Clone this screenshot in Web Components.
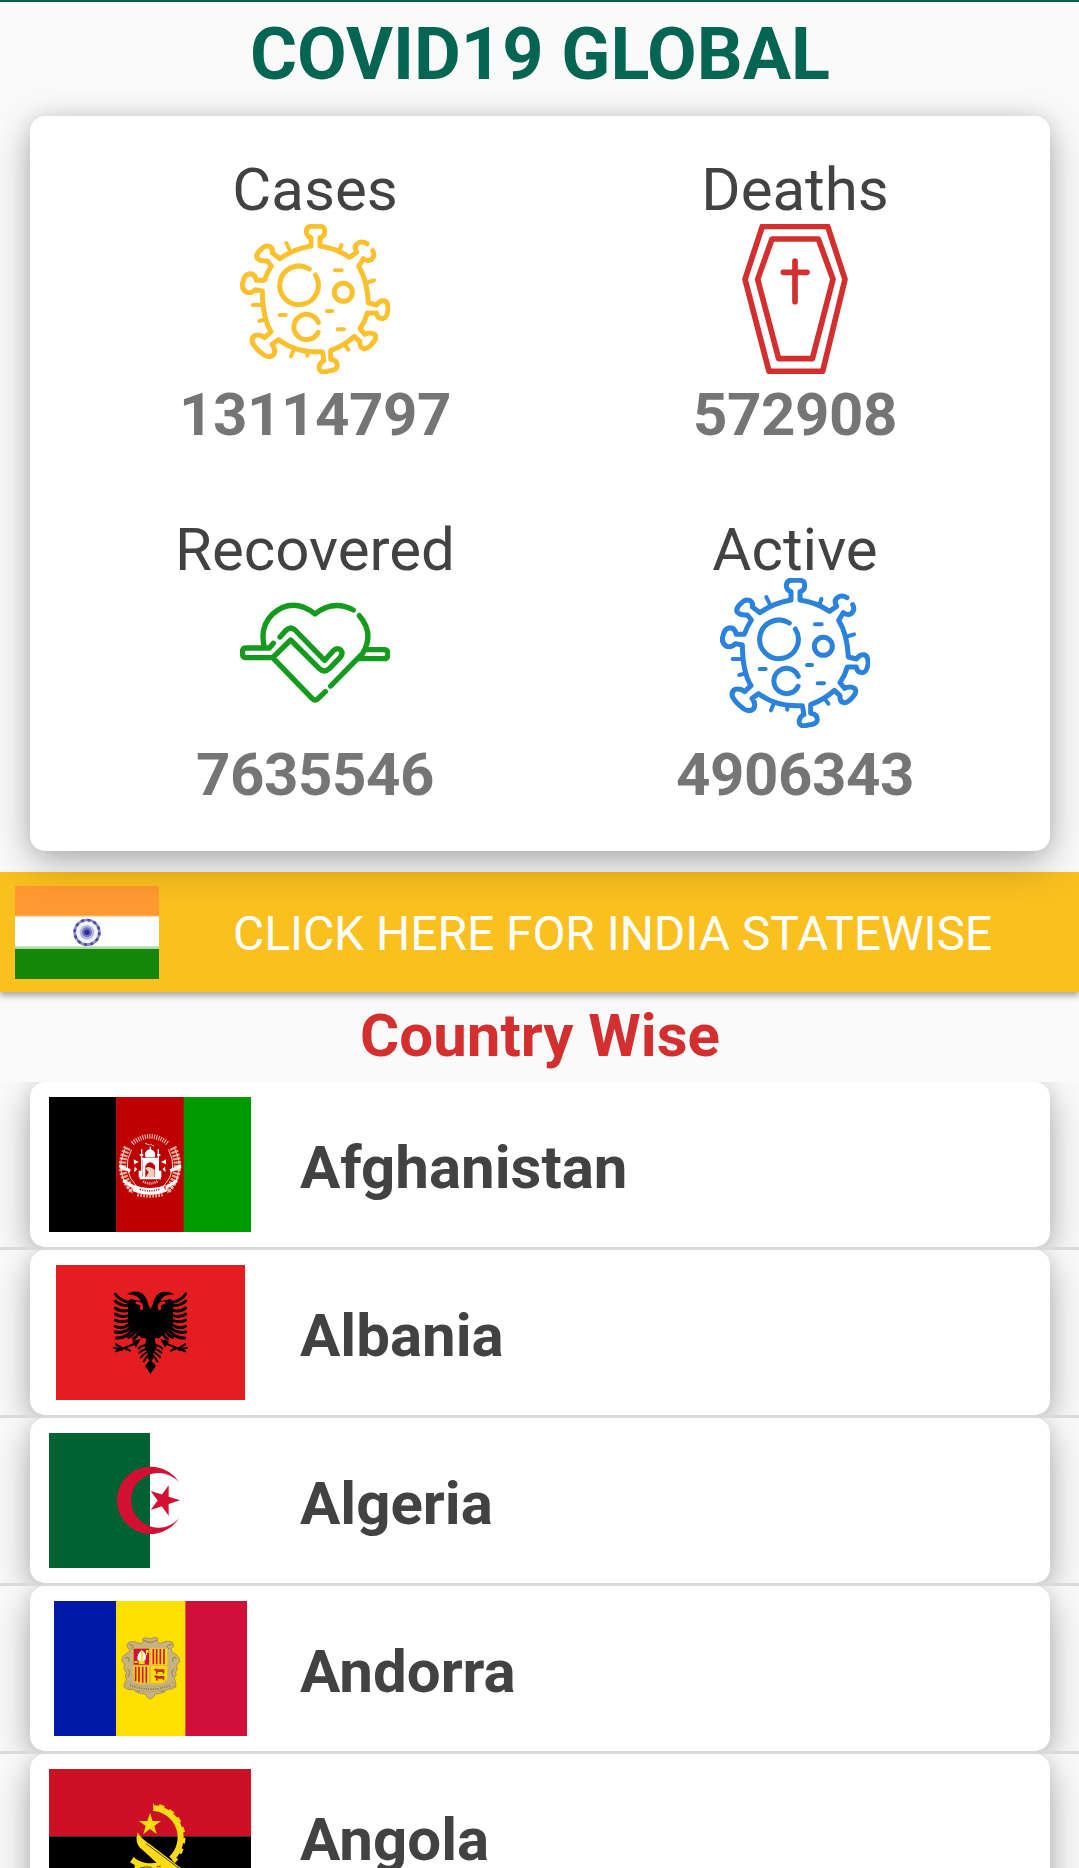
<!DOCTYPE html>
<html lang="en">
<head>
<meta charset="utf-8">
<title>COVID19 GLOBAL</title>
<style>
html,body{margin:0;padding:0}
body{width:1079px;height:1868px;overflow:hidden;background:#fafafa;font-family:Roboto,"Liberation Sans",sans-serif;color:#424242}
</style>
</head>
<body>
<covid-app></covid-app>
<script>
const define = (name, html) => {
  const t = document.createElement('template');
  t.innerHTML = html;
  customElements.define(name, class extends HTMLElement {
    constructor() {
      super();
      this.attachShadow({mode: 'open'}).append(t.content.cloneNode(true));
    }
  });
};

const virus = `<svg viewBox="30 27 450 450" fill="none" stroke="currentColor" stroke-width="15" stroke-linecap="round" stroke-linejoin="round">
<path d="M411 86Q395 76 382 86Q370 95 380 112L358 127Q320 100 270 93V68Q284 64 284 50Q285 34 270 34H244Q231 34 229 48Q228 62 243 68V93Q190 102 150 131L127 114Q130 100 118 94Q104 90 90 106Q76 120 82 130Q92 140 112 138L124 153Q110 175 103 196H79Q74 174 56 177Q42 180 38 205Q34 222 50 232Q64 236 76 224L97 228Q98 310 123 350L104 368Q92 358 76 361Q62 368 68 385Q80 405 102 420Q118 430 130 420Q140 405 126 388L146 374Q200 415 277 410L282 437Q272 440 268 453Q265 470 282 471L300 467Q320 466 322 452Q322 436 302 433V407Q345 390 373 364L390 380Q388 398 402 401Q415 402 430 382Q442 368 434 358Q420 350 404 358L390 341Q405 320 412 294H439Q440 308 455 311Q470 312 474 285Q476 262 462 257Q447 256 440 270L415 264Q412 195 386 154L400 131Q412 141 425 133Q436 122 428 107"/>
<path stroke-width="12" d="M179 105L169 84M329 105L334 90M412 202L432 196M95 270H68M103 314L88 318M191 404L183 424M231 410L232 422M346 392L355 404M315 166H335M149 300H167M291 288H306M323 343H342"/>
<path d="M238 162A58 58 0 1 0 256 180M265 322A38 38 0 1 0 264 352"/><circle cx="340" cy="232" r="27"/></svg>`;

const iconCss = `<style>:host{display:block;width:150px;height:150px}svg{display:block;width:150px;height:150px}</style>`;
define('icon-virus', iconCss + virus);
define('icon-coffin', iconCss + `<svg viewBox="-30 27 450 450" fill="none" stroke="currentColor" stroke-width="17" stroke-linecap="round" stroke-linejoin="round">
<path d="M97 34H293L345 193L278 469H117L45 193ZM126 72H265L309 193L247 431H146L83 193ZM195 138V260M160 172H231"/></svg>`);
define('icon-heart', iconCss + `<svg viewBox="30 -36 450 450" fill="none" stroke="currentColor" stroke-width="16" stroke-linecap="round" stroke-linejoin="round">
<path d="M130 160L118 174H49Q37 174 37 188Q37 203 49 203H128L182 150L268 236Q283 250 298 236L330 203Q341 190 332 180Q320 172 310 182L284 211L195 120Q181 107 167 122L150 141M103 172Q88 110 128 72Q188 20 255 72Q310 28 370 60M388 77Q434 130 398 190L302 288M128 203L246 325Q255 335 264 326L286 305M406 179H462Q474 180 474 192Q473 206 462 206H388"/></svg>`);

define('app-title', `<style>
:host{display:block;height:114px;border-top:2px solid #00614f;text-align:center}
h1{margin:0;padding-left:1px;font-size:72px;line-height:105px;font-weight:700;color:#046553}
</style><h1><slot></slot></h1>`);

define('stat-tile', `<style>
:host{display:flex;flex-direction:column;align-items:center}
.label{font-size:60px;line-height:var(--label,71px);margin-bottom:var(--pull,-1px);color:#424242}
.value{font-size:60px;font-weight:700;line-height:var(--value,81px);letter-spacing:-.4px;color:#757575}
</style><div class="label"><slot name="label"></slot></div><slot></slot><div class="value"><slot name="value"></slot></div>`);

define('stats-card', `<style>
:host{display:grid;grid-template-columns:480px 480px;row-gap:66px;align-content:start;box-sizing:border-box;width:1020px;height:735px;margin:0 29px 0 30px;padding:38px 15px 0 45px;background:#fff;border-radius:15px;position:relative;z-index:1;
box-shadow:0 12px 42px rgba(0,0,0,.28),0 2px 18px rgba(0,0,0,.10)}
</style><slot></slot>`);

define('india-flag', `<style>:host,svg{display:block;width:144px;height:93px}</style>
<svg viewBox="45 198 432 279" preserveAspectRatio="none"><path fill="#ff9932" d="M45 198h432v93H45z"/><path fill="#fff" d="M45 290h432v95H45z"/><path fill="#138808" d="M45 386h432v91H45z"/><path fill="#ffd9b4" d="M45 287h432v4H45z"/><path fill="#b7dcb4" d="M45 379h432v7H45z"/>
<circle cx="261" cy="337" r="37" fill="#f3f3fb" stroke="#8b8bc8" stroke-width="8"/><circle cx="261" cy="337" r="37" fill="none" stroke="#4a4aa6" stroke-width="8" stroke-dasharray="9 10.4"/><circle cx="261" cy="337" r="22" fill="#b9b9e0"/><circle cx="261" cy="337" r="15" fill="#7272be"/><circle cx="261" cy="337" r="8" fill="#2a2a9c"/></svg>`);

define('state-link', `<style>
:host{display:flex;align-items:center;box-sizing:border-box;height:120px;margin-top:21px;padding:0 0 0 15px;background:#fac01f;color:#fff;box-shadow:0 4px 6px rgba(0,0,0,.32)}
.text{flex:1;padding:4px 0 0 74px;font-size:48px;line-height:60px;letter-spacing:-.07px;white-space:nowrap}
</style><india-flag></india-flag><div class="text"><slot></slot></div>`);

define('section-title', `<style>
:host{display:block;height:90px;text-align:center}
h2{margin:0;padding-left:1px;font-size:60px;line-height:87px;font-weight:700;color:#d32f2f}
</style><h2><slot></slot></h2>`);

const flag = (w, box, art) => `<style>:host{display:block}svg{display:block;width:${w}px;height:135px}</style><svg viewBox="${box}">${art}</svg>`;

define('flag-af', flag(202, '27 21 606 405', `
<path d="M27 21h203v405H27z"/><path fill="#be0000" d="M229 21h203v405H229z"/><path fill="#090" d="M431 21h202v405H431z"/>
<g fill="none" stroke="#f3cfc6" stroke-linecap="round">
<path stroke-width="14" stroke-dasharray="3 4" stroke-linecap="butt" d="M277 160Q330 118 383 160"/>
<path stroke-width="3" d="M316 160l12 5m4-2l9 5"/>
<path stroke="#e7a693" stroke-width="22" stroke-dasharray="7 4" stroke-linecap="butt" d="M262 172Q226 242 280 304M398 172Q434 242 380 304"/>
<path stroke="#f6dcd4" stroke-width="3" d="M255 178Q221 245 277 309M405 178Q439 245 383 309M274 180Q242 238 290 290M386 180Q418 238 370 290"/>
</g>
<g fill="#fff"><path d="M239 223l33 15-2 9-31-12zM423 223l-34 15 3 9 32-12zM249 266l40 24-3 9-36-21zM413 266l-41 24 3 9 36-21zM284 285q45 20 92 0l7 19q-52 22-105 0z"/>
<path d="M308 262v-55h45v55h-8v-35q-14-20-29 0v35zM299 261h64v7h-64zM303 203h54v6h-54zM317 202q-6-13 3-20 10-8 20 0 9 7 4 20zM329 170h4v12h-4zM303 178h4v83h-4zM353 178h4v83h-4zM299 192h11v5h-11zM351 192h10v5h-10zM296 242h10v20h-10zM354 242h10v20h-10z"/>
<path fill="#f4cabf" d="M316 235q10-10 28 4v23h-27l9-15z"/><path d="M281 208l15 8-14 7zM378 208l-15 8 15 7zM284 230l8 8-10 9zM375 230l-8 8 10 9z"/></g>
<path d="M300 298q30 10 62-1" fill="none" stroke="#be0000" stroke-width="5" stroke-dasharray="3 4"/>
<path d="M309 274q20 12 44 0" fill="none" stroke="#f2c4ba" stroke-width="8" stroke-dasharray="3 3"/>
<path fill="none" stroke="#e9b0a0" stroke-width="10" stroke-dasharray="5 4" d="M292 314q38 8 76 0"/>`));

const eagleHalf = `<path d="M333 180L325 164Q320 133 296 125L278 125L260 133L283 136Q298 142 302 153L281 149Q270 143 264 155V222Q273 242 285 242L305 265H319L314 292L332 330H333Z"/>
<path fill="none" stroke="#000" stroke-width="9" stroke-linecap="round" d="M270 158Q238 151 226 132M268 167Q240 168 226 153M267 181Q242 187 226 174M267 196Q242 204 226 192M268 210Q244 221 226 210M272 220Q246 241 226 229M276 228Q256 252 226 246M282 233Q260 266 229 264M290 238Q275 260 266 262M299 240Q292 260 281 266"/>
<path fill="none" stroke="#e41e20" stroke-width="9" stroke-linecap="round" d="M291 158Q309 160 304 176"/>
<path d="M276 273L302 267 288 293Z"/>
<path fill="none" stroke="#000" stroke-width="6" stroke-linecap="round" d="M282 282L228 304M246 299L222 293M248 296L228 283M252 294L270 302M319 285Q303 287 296 296M321 295Q306 301 298 308M321 306Q309 314 303 321M324 316Q314 328 311 334"/>
<path d="M333 300L323 323L328 333L315 348L332 371H333Z"/>`;
define('flag-al', flag(189, '48 45 567 405', `<path fill="#e41e20" d="M48 45h567v405H48z"/><g>${eagleHalf}</g><g transform="translate(663)scale(-1 1)">${eagleHalf}</g>`));

define('flag-dz', flag(202, '147 39 606 405', `<path fill="#fff" d="M147 39h606v405H147z"/><path fill="#006233" d="M147 39h303v405H147z"/>
<path fill="#d21034" d="M537 187A101 101 0 1 0 537 295A82 82 0 1 1 537 187ZM540 241L452 213L506 287V196L452 270Z"/>`));

define('flag-ad', flag(193, '42 33 579 405', `<path fill="#0018a8" d="M42 33h186v405H42z"/><path fill="#fedf00" d="M228 33h208v405H228z"/><path fill="#d0103a" d="M436 33h185v405H436z"/>
<path fill="#c7b37f" stroke="#a08b50" stroke-width="2.5" d="M331 146Q350 139 354 146Q350 157 360 161Q382 148 398 158Q405 170 394 176Q392 185 404 191Q420 200 419 216Q408 220 411 228Q415 238 407 246Q412 256 403 263Q408 278 408 290Q401 298 382 298Q374 310 347 312Q339 324 331 328Q322 324 315 312Q289 310 281 299Q260 300 252 291Q251 280 259 270Q253 257 259 247Q248 238 253 228Q257 219 246 215Q244 199 260 190Q273 184 267 177Q256 170 266 157Q282 150 300 161Q312 160 308 146Q316 141 331 146Z"/>
<path fill="none" stroke="#8f7b48" stroke-width="3" d="M268 163q20 5 6 15M394 163q-20 5-6 15M311 150q20 14 40 0M255 205q14-9 12 10M410 205q-14-9-12 10M262 236q12 10 2 25M402 236q-12 10-2 25M290 304q41-10 82 0"/>
<path fill="#c7b37f" stroke="#9a8755" d="M262 276Q290 290 331 291Q372 290 400 276L404 289Q370 305 331 306Q291 305 258 290Z"/>
<path fill="none" stroke="#77704b" stroke-width="5" stroke-dasharray="3 4" d="M270 286Q331 309 393 286"/>
<path fill="#e2b84c" d="M278 173h106v86q0 20-22 22h-62q-22-2-22-22z"/>
<path fill="#d0103a" d="M281 176h46v48h-46z"/><path fill="#fedf00" d="M333 176h48v48h-48zM281 229h46v50h-29q-17-3-17-18zM333 229h48v32q0 15-17 18h-31z"/>
<path stroke="#d0103a" stroke-width="5" d="M340 177v46M350 177v46M361 177v46M372 177v46M287 230v43M297 230v47M308 230v48M319 230v48"/>
<path fill="#fff" d="M305 180q18 12 11 31l-12 5-11-5q-5-15 12-31z"/><path fill="#fedf00" d="M303 183h5v33h-5zM296 214h18v8h-18zM318 180h8v8h-5v8h-4zM283 213h10v6h-10z"/>
<path fill="#c2302f" d="M341 239l7-4 4 3h21v13h-5v-5h-15v6h-5v-8zM341 259l7-4 4 3h21v13h-5v-5h-15v6h-5v-8z"/>`));

define('flag-ao', flag(202, '147 102 606 405', `<path fill="#cc1126" d="M147 102h606v202H147z"/><path d="M147 304h606v203H147z"/>
<g fill="none" stroke="#ffdb16"><path stroke-width="18" d="M460 219A88 88 0 0 1 514 371"/><path stroke-width="13" stroke-dasharray="16 16" stroke-dashoffset="-18" d="M459 211A98 98 0 0 1 520 379"/></g>
<path fill="#ffdb16" d="M450 234l8 24h25l-20 15 7 24-20-15-20 15 7-24-20-15h25zM413 292Q424 312 450 328L545 401V430H520L428 345Q407 331 410 306ZM401 366Q414 380 438 384Q465 387 487 379L488 430H404L404 390L390 382Z"/>
<path fill="none" stroke="#000" stroke-width="2" d="M438 326L540 402M420 399q20-6 35-2M470 396l12-3"/>`));

define('country-row', `<style>
:host{display:block;height:165px;overflow:hidden;border-bottom:3px solid #dadada}
.card{display:flex;align-items:center;box-sizing:border-box;height:165px;margin:0 29px 0 30px;padding-left:19px;background:#fff;border-radius:15px;box-shadow:0 12px 42px rgba(0,0,0,.28),0 2px 18px rgba(0,0,0,.10)}
.flag{display:flex;justify-content:center;width:202px}
.name{margin-left:49px;padding-top:6px;font-size:60px;line-height:72px;font-weight:700;color:#424242}
</style><div class="card"><div class="flag"><slot name="flag"></slot></div><div class="name"><slot></slot></div></div>`);

define('covid-app', `<style>
:host{display:flex;flex-direction:column;height:1868px;overflow:hidden}
:host>*{flex:none}
.lower{--label:57px;--value:93px;--pull:0px}
</style>
<app-title>COVID19 GLOBAL</app-title>
<stats-card>
<stat-tile><span slot="label">Cases</span><icon-virus style="color:#fbc02d"></icon-virus><span slot="value">13114797</span></stat-tile>
<stat-tile><span slot="label">Deaths</span><icon-coffin style="color:#d32f2f"></icon-coffin><span slot="value">572908</span></stat-tile>
<stat-tile class="lower"><span slot="label">Recovered</span><icon-heart style="color:#149a1c"></icon-heart><span slot="value">7635546</span></stat-tile>
<stat-tile class="lower"><span slot="label">Active</span><icon-virus style="color:#2a82da"></icon-virus><span slot="value">4906343</span></stat-tile>
</stats-card>
<state-link>CLICK HERE FOR INDIA STATEWISE</state-link>
<section-title>Country Wise</section-title>
<country-row><flag-af slot="flag"></flag-af>Afghanistan</country-row>
<country-row><flag-al slot="flag"></flag-al>Albania</country-row>
<country-row><flag-dz slot="flag"></flag-dz>Algeria</country-row>
<country-row><flag-ad slot="flag"></flag-ad>Andorra</country-row>
<country-row><flag-ao slot="flag"></flag-ao>Angola</country-row>`);
</script>
</body>
</html>
